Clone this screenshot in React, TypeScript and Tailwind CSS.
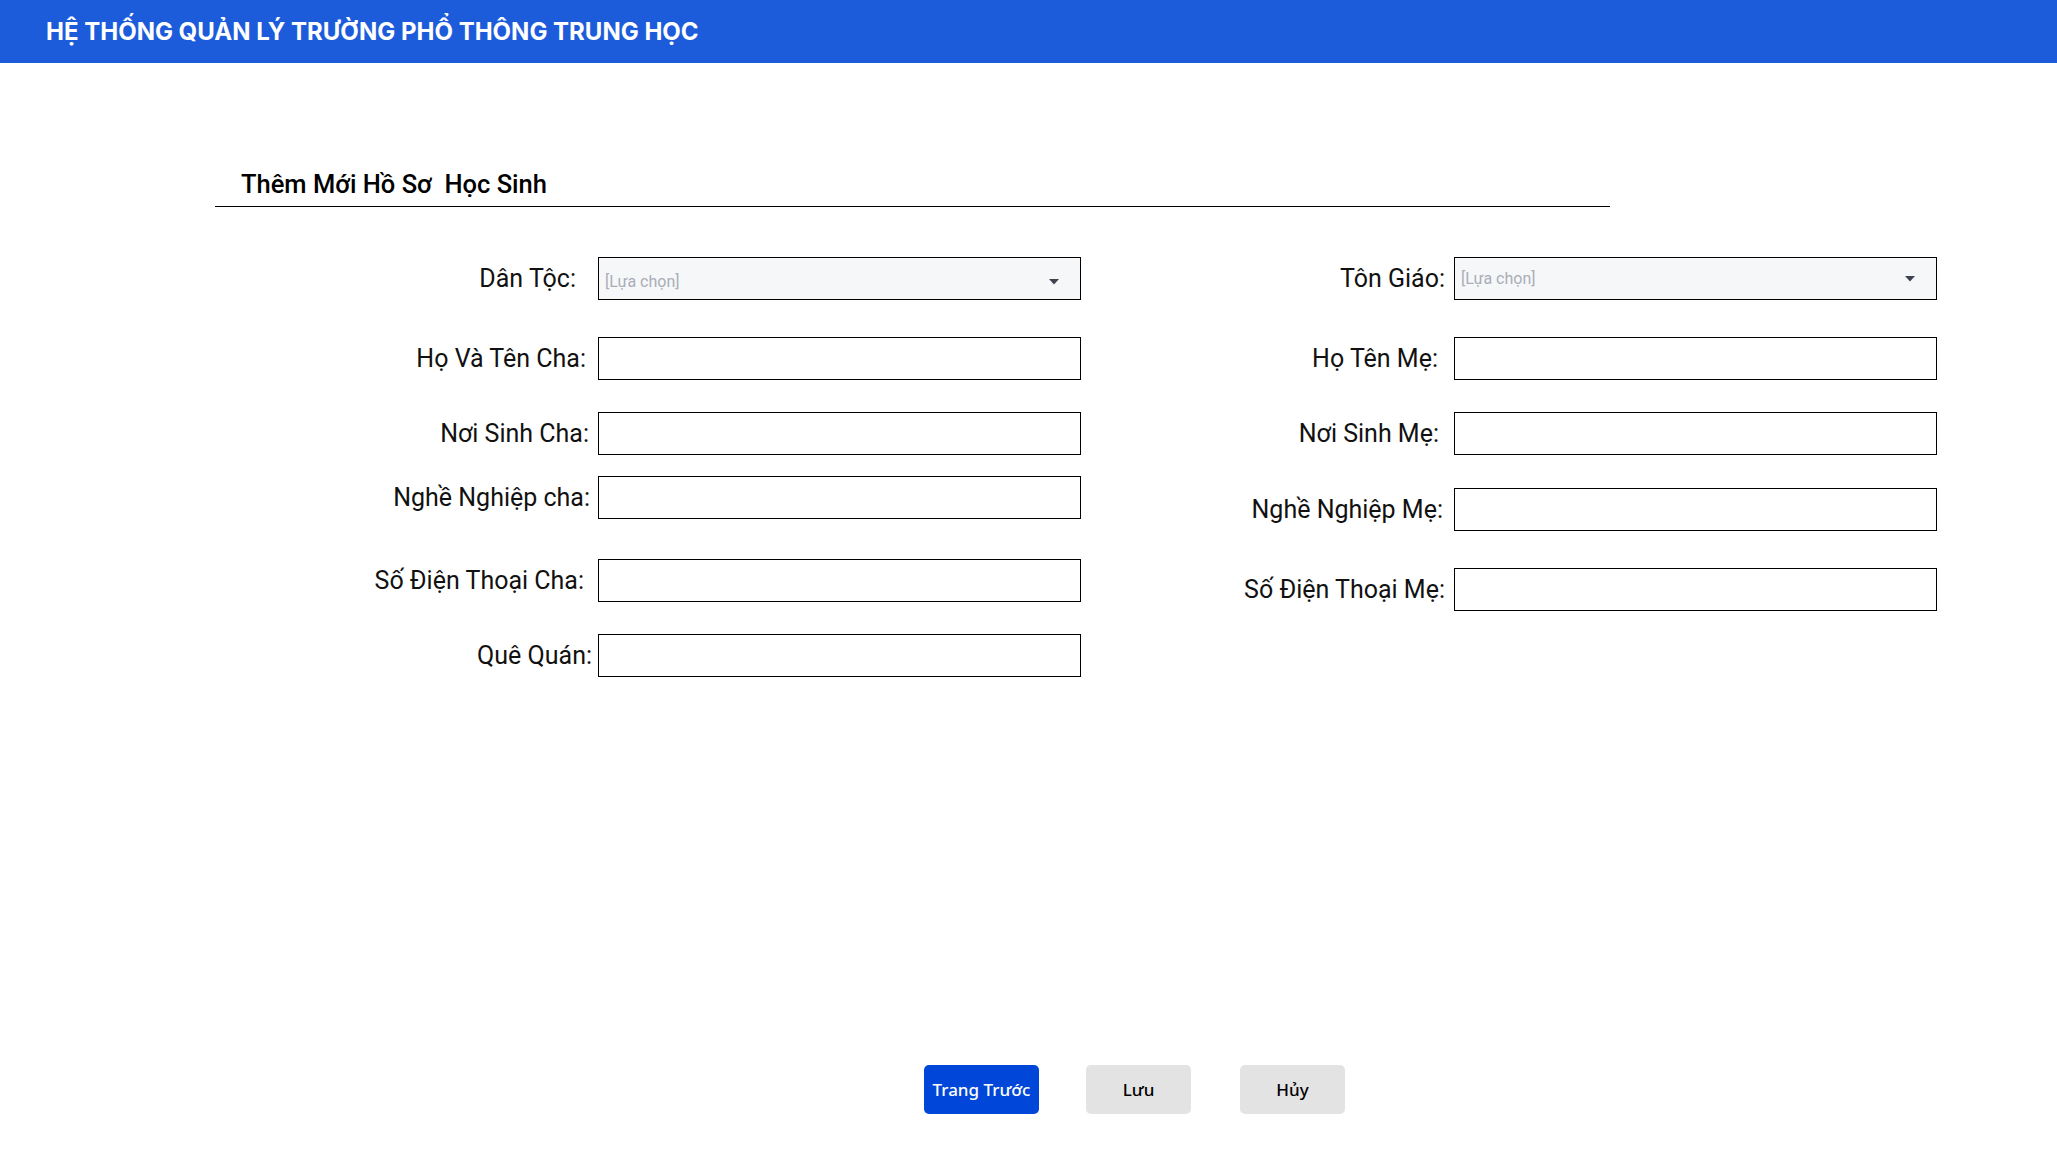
import React from "react";

const Caret = () => (
  <svg width="10" height="6" viewBox="0 0 10 6" className="shrink-0">
    <path d="M0 0 L10 0 L5 5.5 Z" fill="#3f4350" />
  </svg>
);

type Row = { label: string; pr: string; mt: string; select?: boolean; low?: boolean };

const leftRows: Row[] = [
  { label: "Dân Tộc:", pr: "pr-[22px]", mt: "mt-0", select: true, low: true },
  { label: "Họ Và Tên Cha:", pr: "pr-[12px]", mt: "mt-[37px]" },
  { label: "Nơi Sinh Cha:", pr: "pr-[9px]", mt: "mt-[32px]" },
  { label: "Nghề Nghiệp cha:", pr: "pr-[8px]", mt: "mt-[21px]" },
  { label: "Số Điện Thoại Cha:", pr: "pr-[14px]", mt: "mt-[40px]" },
  { label: "Quê Quán:", pr: "pr-[6px]", mt: "mt-[32px]" },
];

const rightRows: Row[] = [
  { label: "Tôn Giáo:", pr: "pr-[9px]", mt: "mt-0", select: true },
  { label: "Họ Tên Mẹ:", pr: "pr-[16px]", mt: "mt-[37px]" },
  { label: "Nơi Sinh Mẹ:", pr: "pr-[15px]", mt: "mt-[32px]" },
  { label: "Nghề Nghiệp Mẹ:", pr: "pr-[11px]", mt: "mt-[33px]" },
  { label: "Số Điện Thoại Mẹ:", pr: "pr-[9px]", mt: "mt-[37px]" },
];

function FormRow({ row }: { row: Row }) {
  return (
    <div className={`flex items-center ${row.mt}`}>
      <div
        className={`w-[298px] text-right text-[25px] leading-[30px] text-[#111] ${row.pr}`}
        style={{ fontFamily: "Roboto, 'Noto Sans', sans-serif" }}
      >
        {row.label}
      </div>
      {row.select ? (
        <div className="w-[483px] h-[43px] border border-black bg-[#f6f7f9] flex items-center justify-between pl-[6px] pr-[21px]">
          <span
            className={`text-[16px] text-[#a9adb8] ${row.low ? "mt-[6px]" : ""}`}
            style={{ fontFamily: "Roboto, sans-serif" }}
          >
            [Lựa chọn]
          </span>
          <span className={row.low ? "mt-[6px]" : ""}>
            <Caret />
          </span>
        </div>
      ) : (
        <div className="w-[483px] h-[43px] border border-black bg-white" />
      )}
    </div>
  );
}

export default function App() {
  return (
    <div className="min-h-[1156px] w-full bg-white">
      <header className="h-[63px] bg-[#1c5cdb] flex items-center pl-[46px]">
        <h1
          className="text-white text-[24px] font-bold"
          style={{ fontFamily: "Inter, 'Noto Sans', sans-serif" }}
        >
          HỆ THỐNG QUẢN LÝ TRƯỜNG PHỔ THÔNG TRUNG HỌC
        </h1>
      </header>

      <main>
        <div className="ml-[215px] w-[1395px] mt-[105px] border-b border-black pb-[6px] pl-[26px]">
          <h2
            className="text-[25.5px] leading-[32px] font-medium text-black"
            style={{ fontFamily: "Roboto, sans-serif" }}
          >
            Thêm Mới Hồ Sơ&nbsp; Học Sinh
          </h2>
        </div>

        <div className="flex items-start pl-[300px] gap-[75px] mt-[50px]">
          <div className="flex flex-col">
            {leftRows.map((r) => (
              <FormRow key={r.label} row={r} />
            ))}
          </div>
          <div className="flex flex-col">
            {rightRows.map((r) => (
              <FormRow key={r.label} row={r} />
            ))}
          </div>
        </div>

        <div
          className="flex pl-[924px] mt-[388px] gap-[47px]"
          style={{ fontFamily: "'Noto Sans', sans-serif" }}
        >
          <button className="w-[115px] h-[49px] rounded-[5px] bg-[#0047d9] text-white text-[17px] font-medium">
            Trang Trước
          </button>
          <button className="w-[105px] h-[49px] rounded-[5px] bg-[#e3e3e3] text-black text-[17px] font-medium">
            Lưu
          </button>
          <button className="w-[105px] h-[49px] rounded-[5px] bg-[#e3e3e3] text-black text-[17px] font-medium ml-[2px]">
            Hủy
          </button>
        </div>
      </main>
    </div>
  );
}
